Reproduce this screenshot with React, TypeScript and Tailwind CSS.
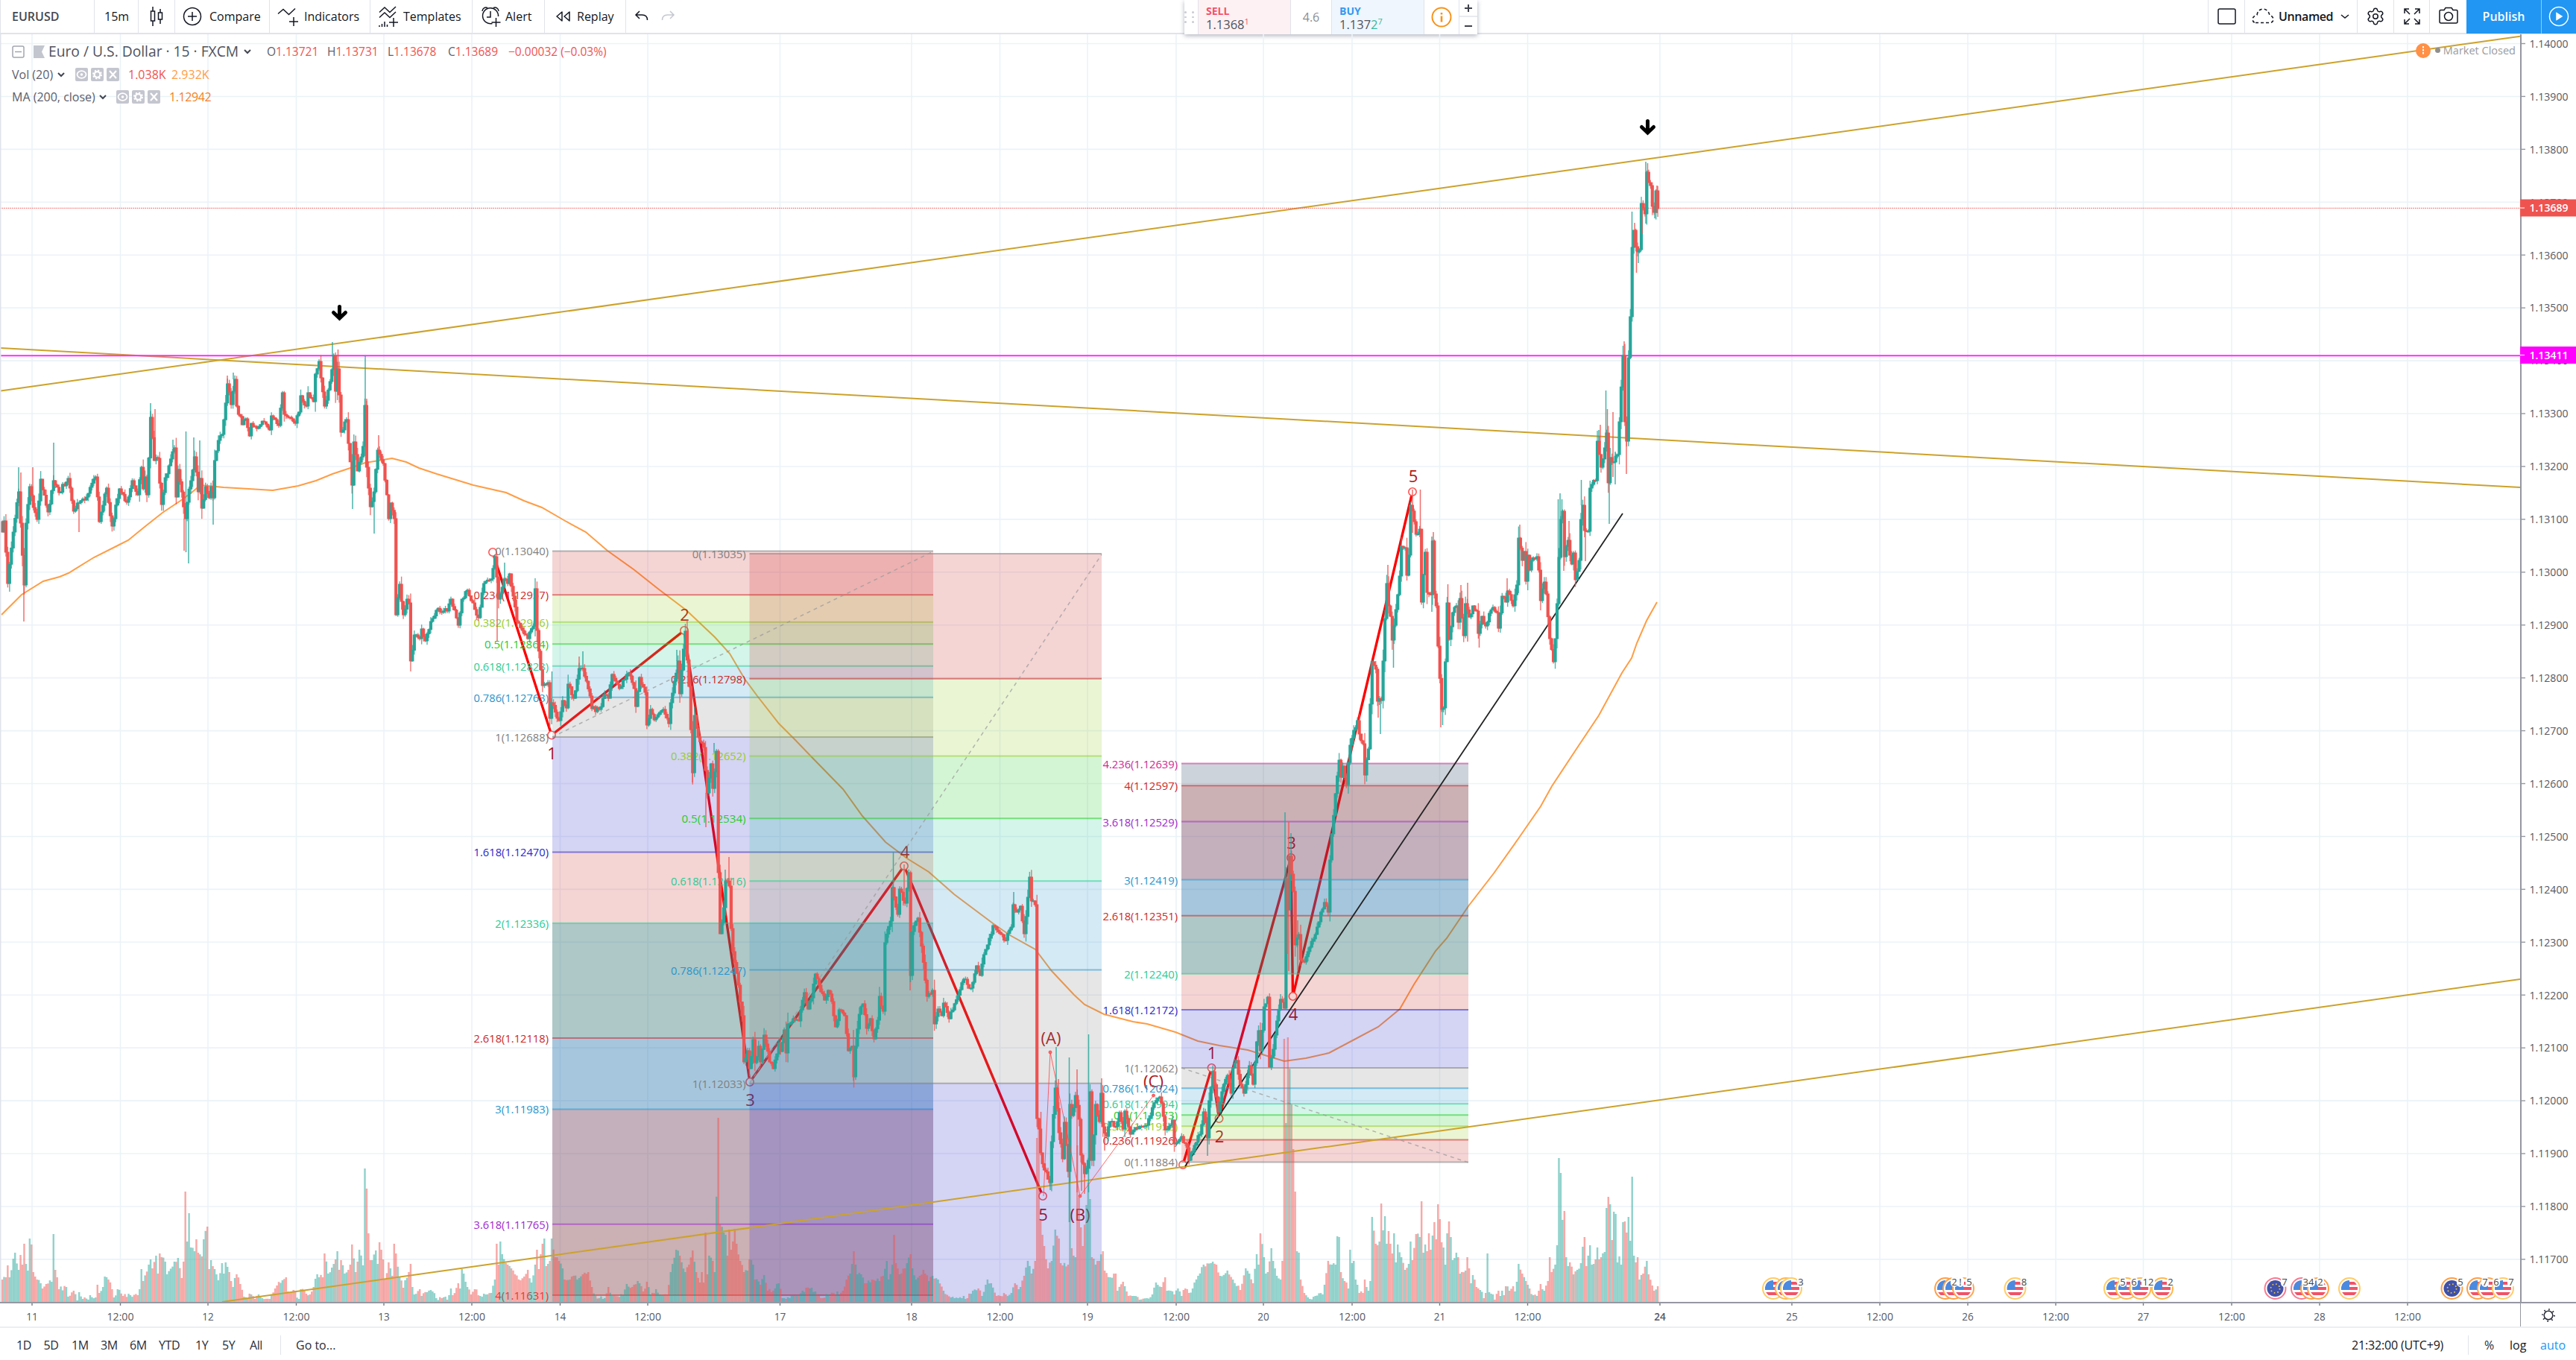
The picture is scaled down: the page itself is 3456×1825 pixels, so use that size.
import React from "react";
import { Settings } from "lucide-react";
import { clsx } from "clsx";

type Pt = [number, number];

const TOP = 46;
const BOTTOM = 1747;
const WIDTH = 3381;
const STEP = 2.457;
const FONT = "'Open Sans', 'Noto Sans', sans-serif";

const UP = "#26a69a";
const DOWN = "#ef5350";

const priceY = (price: number) => 58.5 + (1.14 - price) * 70930;

// Flat "x y x y ..." list to points
const parse = (s: string): Pt[] => {
  const n = s.trim().split(/\s+/).map(Number);
  const out: Pt[] = [];
  for (let i = 0; i < n.length; i += 2) out.push([n[i], n[i + 1]]);
  return out;
};

const CLOSES = parse(`
3 714 5 699 7 741 11 783 18 714 25 660 28 702 32 785 36 702 40 653 45 681 50 697 55 643 65 687 72 645 80 661 92 642
98 686 103 675 114 671 129 640 134 700 143 655 151 706 160 656 171 674 177 645 186 664 190 627 193 656 195 640 198 664
202 560 208 618 212 615 217 677 221 641 234 601 237.5 667 240 630 248 696 250 629 252 674 262 613 267 660 269 642
271 682 275 653 280 668 283 653 286 668 289 618 292 591 297 560 299 583 304 515 309 543 314 509 317 545 325 570
329 562 335 585 338 568 344 575 354 566 361 577 365 558 373 571 378 527 382 556 395 568 400 553 404 531 411 545
413 527 421 539 424 502 428 485 436 545 442 512 447 477 450 525 452 495 456 530 458 580 464 563 468 595 472 651
475 593 480 632 486 599 490 544 493 627 497 680 502 660 507 604 515 622 520 664 522 696 525 675 529 696 531 825
535 784 540 825 546 804 549 809 550 887 556 852 562 857 566 844 571 860 578 834 585 819 601 820 605 804 614 839
620 804 626 792 635 809 643 829 650 783 659 777 664 747 670 804 676 777 680 783 683 770 689 800 693 834 700 846
707 857 715 840 719 790 721 846 727 863 729 920 734 916 738 964 741 943 749 967 755 940 759 950 763 918 770 937
777 897 781 914 783 897 792 934 795 951 804 952 811 932 816 937 822 905 832 924 843 903 850 924 854 948 859 909
866 929 868 973 872 952 878 966 889 952 897 971 901 943 909 887 911 931 916 871 919 847 924 921 929 1037 932 960
937 989 943 1003 949 1064 953 1025 956 1058 961 1008 963 1171 966 1253 970 1218 973 1182 978 1189 981 1246 984 1277
990 1322 996 1363 999 1425 1002 1410 1006 1434 1010 1395 1012 1426 1017 1404 1020 1425 1026 1389 1032 1425 1038 1434
1045 1400 1047 1411 1052 1382 1054 1413 1057 1374 1065 1367 1072 1370 1078 1332 1085 1354 1089 1339 1093 1307
1105 1342 1111 1329 1116 1344 1120 1378 1127 1355 1134 1363 1138 1410 1142 1404 1145 1445 1149 1404 1154 1361
1158 1347 1162 1380 1168 1367 1172 1394 1177 1369 1181 1337 1185 1357 1188 1265 1194 1236 1198 1191 1204 1227
1208 1193 1215 1212 1219 1171 1221 1309 1224 1250 1231 1232 1235 1251 1243 1337 1250 1329 1253 1374 1258 1354
1263 1363 1267 1346 1274 1367 1287 1328 1294 1314 1303 1326 1311 1296 1316 1309 1321 1281 1327 1259 1333 1242
1341 1253 1350 1262 1356 1244 1360 1214 1364 1224 1369 1216 1374 1253 1378 1204 1382 1177 1385 1209 1388 1214
1390.5 1501 1394 1515 1396 1547 1400 1587 1402 1570 1408 1587 1412 1532 1415 1512 1417 1460 1421 1520 1426 1555
1428 1506 1432 1572 1435 1482 1438 1497 1444 1470 1447 1502 1449.5 1550 1455 1575 1459.5 1557 1461.5 1465 1464 1557
1469 1482 1474 1505 1477 1467 1480 1512 1484 1525 1489 1505 1496 1512 1502 1493 1506 1515 1509 1491 1517 1522
1524 1513 1538 1510 1544 1497 1548 1480 1555 1472 1559 1480 1563 1516 1572 1503 1576 1535 1585 1525 1592 1540
1595 1557 1602 1537 1609 1522 1615 1492 1619 1527 1623 1477 1627 1438 1632 1472 1635 1492 1639 1465 1646 1443
1651 1467 1655 1433 1660 1423 1665 1455 1669 1467 1675 1430 1682 1455 1685 1398 1688 1383 1691 1410 1695 1338
1697 1351 1701 1338 1704 1432 1709 1408 1713 1370 1718 1341 1722 1353 1724.5 1179 1728 1221 1731 1149 1736 1196
1738.5 1268 1743 1254 1746 1288 1751 1291 1758 1271 1765 1254 1771 1224 1776 1211 1781 1224 1784 1154 1788 1119
1792 1065 1796 1020 1799 1043 1801 1028 1807 1053 1811 1000 1817 980 1820 967 1823 985 1828 998 1830 1040 1835 1005
1840 1013 1842 888 1846 898 1848 941 1852 940 1855 887 1858 830 1861 783 1863 813 1866 827 1868.5 859 1872 818
1877 773 1879 733 1886 735 1888 772 1891 745 1893.5 678 1897 700 1901 717 1904 710 1907 808 1912 741 1914 795
1919 798 1921.5 726 1925 797 1928 813 1930 867 1933 952 1937 950 1940 888 1942 809 1945 858 1948 822 1954 813
1956 835 1959 803 1964 853 1967 810 1971 828 1976 813 1981 820 1984 850 1988 827 1993 840 1997 823 2003 815
2008 822 2011 843 2015 800 2020 808 2022 793 2031 813 2035 785 2037.5 722 2042 752 2044 740 2047 780 2050 745
2052 765 2055 752 2062 747 2064 765 2067 806 2071 781 2075 797 2078 857 2083 888 2087 857 2089 810 2091 748
2093 697 2096 686 2099 747 2104 725 2107 745 2109 757 2112 742 2114 778 2118 752 2120 697 2122.5 678 2126 712
2130 713 2132 690 2134 655 2136 650 2141 645 2144 592 2148 627 2152 601 2154.5 581 2157 648 2160 614 2164 620
2170 610 2172 566 2176.5 477 2179.5 566 2182 592 2184.5 480 2187 425 2189.5 332 2191.5 309 2194 331 2196 338
2199 335 2201 273 2204 279 2206 287 2208.5 231 2211 245 2214 249 2216 277 2219 285 2221 256 2223.5 280`);

// Standout wicks: x, from, to, direction
const WICKS: [number, number, number, boolean][] = [
  [25, 627, 660, true], [28, 634, 700, false], [32, 785, 834, false], [44, 627, 680, false], [72, 594, 645, true],
  [106, 675, 714, false], [202, 541, 560, true], [208, 549, 618, false], [232, 590, 601, true], [247, 696, 739, false],
  [249.5, 579, 741, true], [253, 674, 756, true], [260, 587, 613, true], [268, 591, 642, true], [286, 660, 704, true],
  [305, 504, 515, false], [313, 500, 509, true], [446, 459, 477, true], [453.5, 469, 530, false], [473, 640, 683, true],
  [490, 477, 544, true], [492, 535, 627, false], [502, 660, 716, true], [508, 584, 604, false], [667, 747, 860, false],
  [677, 755, 777, true], [740.5, 901, 943, true], [782, 874, 897, true], [777, 881, 897, false], [908, 872, 887, true],
  [929, 1037, 1050, false], [947, 1064, 1110, false], [958, 997, 1010, true], [978, 1150, 1189, false], [973, 1167, 1182, true],
  [1145, 1382, 1450, false], [1198.5, 1143, 1191, true], [1221, 1309, 1329, false], [1213, 1160, 1212, false],
  [1221.5, 1250, 1318, true], [1360, 1197, 1214, true], [1396.5, 1492, 1547, false], [1409, 1587, 1597, true],
  [1417, 1405, 1460, true], [1420, 1448, 1520, false], [1434.5, 1419, 1640, true], [1445, 1435, 1600, false],
  [1451, 1550, 1598, false], [1455, 1575, 1602, false], [1460.5, 1388, 1600, true], [1478, 1447, 1470, false],
  [1482, 1515, 1544, false], [1620, 1500, 1551, true], [1724, 1090, 1179, true], [1729, 1103, 1303, false],
  [1732, 1118, 1149, true], [1727, 1200, 1280, false], [1741, 1235, 1302, false], [1852, 940, 985, true],
  [1849, 941, 963, false], [1862, 758, 783, false], [1869.5, 859, 896, true], [1895, 657, 715, false],
  [1905.5, 657, 710, false], [1921, 720, 821, true], [1923, 714, 760, false], [1933, 952, 976, false],
  [1935.5, 950, 973, true], [1942.5, 784, 809, false], [1960, 785, 803, false], [1969, 782, 861, false],
  [1984.5, 850, 869, false], [2022, 776, 793, false], [2039, 704, 722, false], [2090.5, 670, 748, true],
  [2093, 662, 697, true], [2095.5, 670, 686, true], [2098, 747, 766, false], [2105, 699, 725, false],
  [2121.5, 644, 678, true], [2127, 712, 753, false], [2145, 577, 592, true], [2147, 570, 627, false],
  [2154.5, 524, 581, true], [2156.5, 549, 648, false], [2159, 648, 703, true], [2164, 553, 640, false],
  [2167, 606, 650, true], [2179, 458, 477, false], [2182, 592, 636, false], [2189.5, 284, 332, true],
  [2193, 299, 331, false], [2195.5, 338, 366, false], [2198, 335, 353, true], [2203, 279, 313, false],
  [2208, 217, 300, true], [2210.5, 219, 245, false], [2220, 285, 293, true], [2223, 249, 286, false],
];

const VOLUMES = parse(`
3 30 8 33 10 49 14 33 19 41 21 66 25 43 27 63 30 50 32 78 35 51 38 42 40 85 42 77 44 40 50 30 55 25 58 18 62 24 70 27
72 91 74 43 77 33 80 17 88 20 92 7 100 15 103 2 107 13 112 4 118 3 122 9 128 6 131 23 134 12 138 20 141 34 146 30
150 17 154 6 159 17 165 8 175 9 186 9 188 17 190 44 192 28 200 50 202 57 204 45 210 62 212 38 215 65 222 54 225 37
233 40 235 54 240 59 243 32 247 54 249.5 148 251 81 253.5 119 256 73 260 68 264 84 266 66 271 61 274 84 277 104
279 101 281 44 284 56 288 44 294 29 299 52 301 38 303 53 308 40 312 20 315 32 318 37 322 24 327 7 333 4 335 11 342 4
348 10 353 5 362 4 368 18 372 22 378 29 383 33 387 14 393 16 400 4 403 17 410 11 416 10 420 20 425 37 433 33 436 65
440 38 446 46 449 64 451 57 453 68 456 43 458 56 462 38 468 43 471 50 473 77 477 40 480 54 482 70 487 49 489.5 179
492 152 494 92 497 56 500 56 503 69 507 51 510 80 512 70 515 57 517 30 522 53 527 35 530 78 532 65 537 34 540 19
544 29 548 40 550.5 51 553 20 555 10 562 17 566 8 574 13 580 14 586 5 592 5 597 7 601 3 604 18 608 9 614 25 617 18
619 44 623 38 627 20 633 10 638 17 645 8 650 11 658 12 663 30 667 78 669 50 672 81 674 64 680 50 690 37 698 29
703 34 708 43 712 26 718 50 721 70 723 44 728 78 731 85 733 48 737 55 740 85 745 60 750 55 754 45 758 30 765 30
770 35 775 30 778 32 781 69 783 37 790 40 795 20 800 8 805 5 812 5 817 20 822 8 835 9 840 24 848 20 855 28 862 14
868 27 872 10 880 17 885 10 895 10 900 40 908 70 913 62 920 40 925 50 929 69 934 40 938 26 942 40 945 26 947.5 93
950 37 952 62 957 55 960 40 962.5 247 965 158 967 104 970 93 973 90 976 62 978 97 982 70 985 98 988 78 992 55
998 40 1004 42 1006 57 1010 50 1013 30 1020 23 1026 36 1030 15 1038 15 1044 25 1050 5 1060 5 1068 8 1076 15 1086 18
1095 14 1102 5 1110 10 1120 10 1130 15 1136 30 1141 38 1145 68 1147 50 1150 37 1155 37 1160 25 1170 30 1180 28
1185 35 1189 55 1191 30 1196 50 1198.5 90 1202 52 1208 37 1215 45 1222 64 1225 45 1230 30 1235 35 1240 43 1246 28
1252 35 1258 30 1265 15 1275 6 1285 5 1292 8 1298 5 1305 15 1312 18 1318 8 1325 30 1330 25 1338 8 1350 10 1358 12
1362 25 1367 17 1370 20 1375 35 1380 55 1385 38 1388 55 1390.5 220 1393 240 1396 110 1398 90 1400.5 180 1402 75
1407 45 1412 55 1417 97 1420 85 1423 52 1432 50 1434.5 240 1437 72 1440 62 1442 60 1445 210 1447 140 1450 100
1453 75 1457 130 1459 150 1461 160 1463.5 138 1466 60 1470 50 1475 55 1479 68 1483 42 1490 33 1496 38 1500 15
1507 27 1513 8 1522 8 1530 3 1538 5 1545 10 1550 26 1558 20 1563 33 1566 15 1575 10 1580 18 1585 8 1590 18 1595 12
1600 18 1608 35 1614 50 1624 52 1632 50 1638 35 1646 42 1655 30 1665 16 1671 45 1675 38 1681 25 1685 64 1688 50
1692 92 1695 60 1698 38 1702 40 1705 72 1708 55 1712 35 1718 30 1721 55 1724 353 1726.5 240 1729 355 1731.5 265
1734 205 1736.5 148 1739 68 1742 66 1745 30 1750 12 1757 4 1765 8 1775 10 1781 12 1783 55 1787 50 1791 50 1794 88
1796 87 1799 40 1803 28 1807 26 1809 18 1811 70 1813 52 1816 55 1819 30 1824 12 1828 12 1831 30 1835 15 1839 28
1842 114 1845 78 1848 76 1850 81 1852 132 1855 96 1857 115 1860 78 1862 95 1865 78 1867 65 1870 92 1872 53 1876 77
1880 60 1885 43 1890 51 1892 81 1896 56 1901 91 1904 87 1906 135 1909 66 1911 77 1914 68 1916 92 1919 70 1921 89
1924 107 1926 84 1928.5 131 1931 111 1933 80 1936 73 1939 50 1941 92 1943.5 108 1946 87 1949 56 1953 66 1956 60
1958 38 1966 42 1968 60 1970 45 1973 25 1977 36 1980 20 1986 16 1990 5 1993 12 1995 65 1998 13 2003 10 2006 3
2010 15 2013 8 2015 15 2018 9 2020 21 2026 15 2030 21 2033 14 2036 27 2038 51 2042 38 2046 28 2052 18 2058 9
2063 8 2067 24 2070 17 2073 15 2076 28 2079 60 2081 40 2086 50 2089 76 2091 193 2093.5 173 2096 110 2098.5 122
2101 60 2104 48 2107 53 2110 37 2115 43 2120 52 2123 74 2127 87 2129 48 2132 76 2135 50 2140 57 2143 73 2146 57
2149 60 2152 67 2155 126 2157.5 141 2160 131 2162 83 2165 121 2167 118 2170 53 2173 61 2175 50 2177.5 107 2180 108
2182 93 2185 114 2187 82 2189.5 168 2192 62 2195 53 2197 60 2200 30 2204 38 2209 55 2212 37 2216 22 2219 15 2223.5 21`);

const MA = parse(`
2 825 29 798 58 780 80 774 92 769 126 748 160 731 172 725 194 707 218 688 242 672 257 661 269 651 300 654 334 656
366 658 400 652 424 645 446 636 470 628 490 621 514 617 526 615 545 620 562 628 586 636 635 651 679 661 703 672
727 681 760 700 786 714 815 739 850 764 884 791 921 819 959 855 979 877 999 911 1016 934 1045 971 1065 991 1091 1018
1131 1059 1157 1095 1188 1130 1217 1152 1246 1170 1280 1200 1332 1239 1355 1255 1389 1274 1411 1303 1441 1335
1455 1348 1481 1361 1520 1371 1539 1374 1577 1385 1607 1397 1636 1403 1674 1409 1723 1424 1752 1420 1783 1413
1815 1396 1849 1378 1878 1354 1897 1321 1926 1276 1941 1259 1970 1216 2004 1172 2038 1124 2067 1082 2082 1055
2113 1008 2145 960 2176 903 2189 883 2196 863 2209 833 2223 808`);

const noise = (i: number, salt: number) => {
  const v = Math.sin(i * 12.9898 + salt * 78.233) * 43758.5453;
  return v - Math.floor(v);
};

// Snap the known points to bar slots and fill the gaps linearly
const resample = (pts: Pt[], jitter: number) => {
  const last = Math.round((pts[pts.length - 1][0] - 3) / STEP);
  const fixed: (number | undefined)[] = new Array(last + 1).fill(undefined);
  pts.forEach(([x, v]) => {
    fixed[Math.round((x - 3) / STEP)] = v;
  });
  const out: number[] = [];
  let prev = 0;
  for (let i = 0; i <= last; i++) {
    if (fixed[i] !== undefined) {
      out.push(fixed[i] as number);
      prev = i;
      continue;
    }
    let next = i;
    while (fixed[next] === undefined) next++;
    const a = fixed[prev] as number;
    const b = fixed[next] as number;
    const t = (i - prev) / (next - prev);
    out.push(a + (b - a) * t + (noise(i, 4) - 0.5) * jitter);
  }
  return out;
};

const closes = resample(CLOSES, 7);
const volumes = resample(VOLUMES, 6);

const bars = closes.map((c, i) => {
  const o = i === 0 ? 700 : closes[i - 1];
  const x = 3 + i * STEP;
  const range = Math.min(Math.abs(c - o), 40);
  return {
    x,
    up: c < o,
    top: Math.min(o, c),
    bottom: Math.max(o, c),
    high: Math.min(o, c) - noise(i, 1) * (4 + range * 0.3),
    low: Math.max(o, c) + noise(i, 2) * (4 + range * 0.3),
    volume: Math.max(2, volumes[i] ?? 10),
  };
});

const LEVELS: { k: number; line: string; fill: string; alpha: number }[] = [
  { k: 0, line: "#808080", fill: "#cc2828", alpha: 0.2 },
  { k: 0.236, line: "#cc2828", fill: "#95cc28", alpha: 0.2 },
  { k: 0.382, line: "#95cc28", fill: "#28cc28", alpha: 0.2 },
  { k: 0.5, line: "#28cc28", fill: "#28cc95", alpha: 0.2 },
  { k: 0.618, line: "#28cc95", fill: "#2895cc", alpha: 0.2 },
  { k: 0.786, line: "#2895cc", fill: "#808080", alpha: 0.2 },
  { k: 1, line: "#808080", fill: "#2828cc", alpha: 0.2 },
  { k: 1.618, line: "#2828cc", fill: "#cc2828", alpha: 0.2 },
  { k: 2, line: "#28cc95", fill: "#347373", alpha: 0.4 },
  { k: 2.618, line: "#cc2828", fill: "#2070aa", alpha: 0.4 },
  { k: 3, line: "#2895cc", fill: "#6b3957", alpha: 0.4 },
  { k: 3.618, line: "#a028cc", fill: "#7d3943", alpha: 0.4 },
  { k: 4, line: "#cc2828", fill: "#052346", alpha: 0.2 },
  { k: 4.236, line: "#cc2895", fill: "none", alpha: 0 },
];

interface FibProps {
  x1: number;
  x2: number;
  labels: string[];
  zero: number;
  one: number;
}

const Fib: React.FC<FibProps> = ({ x1, x2, labels, zero, one }) => {
  const yAt = (k: number) => priceY(zero + (one - zero) * k);
  return (
    <g>
      {labels.map((_, i) => {
        const next = LEVELS[i + 1];
        if (!next) return null;
        const a = yAt(LEVELS[i].k);
        const b = Math.min(yAt(next.k), BOTTOM);
        return (
          <rect
            key={i}
            x={x1}
            y={Math.min(a, b)}
            width={x2 - x1}
            height={Math.abs(b - a)}
            fill={LEVELS[i].fill}
            fillOpacity={LEVELS[i].alpha}
          />
        );
      })}
      {labels.map((label, i) => {
        const { k, line } = LEVELS[i];
        const y = yAt(k);
        return (
          <g key={label}>
            <line x1={x1} x2={x2} y1={y} y2={y} stroke={line} strokeOpacity={0.55} strokeWidth={2} />
            <text
              x={x1 - 5}
              y={y + 6}
              textAnchor="end"
              fontSize={14.5}
              fontWeight={500}
              fill={line}
              textLength={label.length * 7.17}
              lengthAdjust="spacingAndGlyphs"
            >
              {label}
            </text>
          </g>
        );
      })}
    </g>
  );
};

const FIB_A = [
  "0(1.13040)", "0.236(1.12957)", "0.382(1.12906)", "0.5(1.12864)", "0.618(1.12823)", "0.786(1.12763)",
  "1(1.12688)", "1.618(1.12470)", "2(1.12336)", "2.618(1.12118)", "3(1.11983)", "3.618(1.11765)", "4(1.11631)",
];
const FIB_B = [
  "0(1.13035)", "0.236(1.12798)", "0.382(1.12652)", "0.5(1.12534)", "0.618(1.12416)", "0.786(1.12247)", "1(1.12033)",
];
const FIB_C = [
  "0(1.11884)", "0.236(1.11926)", "0.382(1.11952)", "0.5(1.11973)", "0.618(1.11994)", "0.786(1.12024)",
  "1(1.12062)", "1.618(1.12172)", "2(1.12240)", "2.618(1.12351)", "3(1.12419)", "3.618(1.12529)", "4(1.12597)",
  "4.236(1.12639)",
];

const WAVES: Pt[][] = [
  parse("661 741 740 986.5 918 846 1006 1452 1213 1162 1399 1605"),
  parse("1587 1563 1625.5 1433 1635.5 1501 1732 1151 1734.5 1337 1895 660"),
];
const CORRECTION = parse("1400 1605 1409 1412 1449 1605 1547.5 1470");

const WAVE_LABELS: [string, number, number][] = [
  ["1", 740.5, 1011], ["2", 918.5, 825], ["3", 1006.5, 1476], ["4", 1214, 1143], ["5", 1399.5, 1630],
  ["(A)", 1410, 1393], ["(B)", 1449, 1630], ["(C)", 1547.5, 1451],
  ["1", 1626, 1413], ["2", 1636, 1525], ["3", 1732.5, 1131], ["4", 1735, 1361], ["5", 1896, 639],
];

const TIMES: [string, number][] = [
  ["11", 43], ["12:00", 161.5], ["12", 279], ["12:00", 397.5], ["13", 515], ["12:00", 633], ["14", 751.5],
  ["12:00", 869], ["17", 1046.5], ["18", 1223], ["12:00", 1341.5], ["19", 1459], ["12:00", 1578], ["20", 1695],
  ["12:00", 1814], ["21", 1931.5], ["12:00", 2049.5], ["24", 2227], ["25", 2404], ["12:00", 2522], ["26", 2640],
  ["12:00", 2758], ["27", 2875.5], ["12:00", 2994], ["28", 3112], ["12:00", 3230],
];

const PRICES = Array.from({ length: 24 }, (_, i) => 1.14 - i * 0.001);

const EVENTS: { x: number; flag: "us" | "eu"; ring: string }[] = [
  { x: 2379, flag: "us", ring: "#ffcc66" }, { x: 2396, flag: "us", ring: "#ffb74d" }, { x: 2403, flag: "us", ring: "#ffcc66" },
  { x: 2610, flag: "us", ring: "#ff9f45" }, { x: 2621, flag: "us", ring: "#ff9f45" }, { x: 2634, flag: "us", ring: "#ffa64d" },
  { x: 2703.5, flag: "us", ring: "#ffcc66" }, { x: 2837, flag: "us", ring: "#ffcc66" }, { x: 2853, flag: "us", ring: "#ffb74d" },
  { x: 2871.5, flag: "us", ring: "#ffb74d" }, { x: 2901, flag: "us", ring: "#ffb74d" }, { x: 3052.5, flag: "eu", ring: "#f77a90" },
  { x: 3088, flag: "us", ring: "#f77a90" }, { x: 3101, flag: "us", ring: "#ff9f45" }, { x: 3110, flag: "us", ring: "#ff9f45" },
  { x: 3152, flag: "us", ring: "#ffcc66" }, { x: 3289.5, flag: "eu", ring: "#ff9f45" }, { x: 3324, flag: "us", ring: "#ff9f45" },
  { x: 3338, flag: "us", ring: "#ffa64d" }, { x: 3358, flag: "us", ring: "#ffcc66" },
];

const EVENT_COUNTS: [string, number][] = [
  ["3", 2416], ["2", 2622], ["!", 2630], ["5", 2642], ["8", 2715.5], ["5", 2848], ["6", 2863], ["12", 2882],
  ["2", 2912], ["7", 3065], ["34", 3097], ["2", 3113], ["5", 3301], ["7", 3334], ["6", 3349], ["7", 3369],
];

const toPoints = (pts: Pt[]) => pts.map((p) => p.join(",")).join(" ");

const EventFlag = ({ x, flag, ring }: { x: number; flag: string; ring: string }) => (
  <g transform={`translate(${x} 1729)`}>
    <circle r={14} fill="#fff" stroke={ring} strokeWidth={2} />
    {flag === "us" ? (
      <g clipPath="url(#flagClip)">
        <rect x={-11} y={-11} width={22} height={22} fill="#fff" />
        {[-7, 0, 7].map((y) => (
          <rect key={y} x={-11} y={y - 2} width={22} height={4} fill="#ef5369" />
        ))}
        <rect x={-11} y={-11} width={11} height={13} fill="#4a8ae0" />
      </g>
    ) : (
      <g>
        <circle r={11} fill="#3f51a8" />
        <circle r={6} fill="none" stroke="#f0c94c" strokeWidth={1.8} strokeDasharray="1.6 3.1" />
      </g>
    )}
  </g>
);

const DownArrow = ({ x, y }: { x: number; y: number }) => (
  <path
    d={`M${x} ${y - 8}V${y + 7}M${x - 8} ${y}L${x} ${y + 7.5}L${x + 8} ${y}`}
    fill="none"
    stroke="#000"
    strokeWidth={5}
    strokeLinecap="round"
    strokeLinejoin="miter"
  />
);

const ChartPane = () => (
  <svg width={WIDTH} height={BOTTOM - TOP} viewBox={`0 ${TOP} ${WIDTH} ${BOTTOM - TOP}`} fontFamily={FONT}>
    <defs>
      <clipPath id="flagClip">
        <circle r={11} />
      </clipPath>
    </defs>
    {PRICES.map((p) => (
      <line key={p} x1={0} x2={WIDTH} y1={priceY(p)} y2={priceY(p)} stroke="#ebf3f8" strokeWidth={1.6} />
    ))}
    {TIMES.map(([, x]) => (
      <line key={x} x1={x} x2={x} y1={TOP} y2={BOTTOM} stroke="#ebf3f8" strokeWidth={1.6} />
    ))}

    <polyline points={toPoints(MA)} fill="none" stroke="#ff9d45" strokeWidth={2} />

    {WAVES.map((w, i) => (
      <g key={i}>
        <polyline points={toPoints(w)} fill="none" stroke="#ff0000" strokeWidth={3.4} />
        {w.map(([x, y]) => (
          <circle key={x} cx={x} cy={y} r={5.2} fill="#fff" stroke="#f55" strokeWidth={1.6} />
        ))}
      </g>
    ))}
    {WAVE_LABELS.map(([t, x, y]) => (
      <text key={`${t}${x}`} x={x} y={y + 8} textAnchor="middle" fontSize={22} fontWeight={500} fill="#b01414">
        {t}
      </text>
    ))}

    <Fib x1={741} x2={1252} zero={1.1304} one={1.12688} labels={FIB_A} />
    <Fib x1={1005.5} x2={1478} zero={1.13035} one={1.12033} labels={FIB_B} />
    <Fib x1={1585} x2={1970} zero={1.11884} one={1.12062} labels={FIB_C} />
    <g stroke="#999" strokeOpacity={0.7} strokeWidth={1.5} strokeDasharray="5 5">
      <line x1={741} y1={989} x2={1252} y2={740} />
      <line x1={1006} y1={1453} x2={1478} y2={744} />
      <line x1={1585} y1={1433} x2={1970} y2={1560} />
    </g>

    {bars.map((b) => (
      <rect
        key={b.x}
        x={b.x - STEP / 2}
        y={BOTTOM - b.volume}
        width={STEP}
        height={b.volume}
        fill={b.up ? UP : DOWN}
        fillOpacity={0.5}
      />
    ))}

    <g stroke="#cca22c" strokeWidth={2}>
      <line x1={1} y1={524.5} x2={WIDTH} y2={48.7} />
      <line x1={1} y1={467} x2={WIDTH} y2={654} />
      <line x1={298} y1={1747} x2={WIDTH} y2={1314} />
    </g>
    <line x1={0} x2={WIDTH} y1={477.3} y2={477.3} stroke="#ff2bff" strokeWidth={2} />
    <line
      x1={0}
      x2={WIDTH}
      y1={279.3}
      y2={279.3}
      stroke={DOWN}
      strokeOpacity={0.8}
      strokeWidth={1.2}
      strokeDasharray="1.5 1.2"
    />
    <line x1={1590} y1={1565} x2={2177} y2={689} stroke="#222" strokeWidth={1.8} />

    {bars.map((b) => (
      <g key={b.x} fill={b.up ? UP : DOWN}>
        <rect x={b.x - 0.7} y={b.high} width={1.4} height={b.low - b.high} fillOpacity={0.8} />
        <rect x={b.x - 2.1} y={b.top - 0.5} width={4.2} height={Math.max(2, b.bottom - b.top + 1)} />
      </g>
    ))}
    {WICKS.map(([x, y1, y2, up]) => (
      <line key={`${x}-${y1}`} x1={x} x2={x} y1={y1} y2={y2} stroke={up ? UP : DOWN} strokeOpacity={0.85} strokeWidth={1.5} />
    ))}

    <g fill="none" stroke="#f44" strokeOpacity={0.8}>
      <polyline points={toPoints(CORRECTION)} strokeWidth={1} />
      {CORRECTION.slice(1).map(([x, y]) => (
        <circle key={x} cx={x} cy={y} r={2} fill="#f66" />
      ))}
    </g>

    <DownArrow x={455.5} y={419.5} />
    <DownArrow x={2210.5} y={170.5} />

    {EVENTS.map((e) => (
      <EventFlag key={e.x} {...e} />
    ))}
    {EVENT_COUNTS.map(([t, x]) => (
      <g key={x}>
        <rect x={x - t.length * 4 - 1} y={1713} width={t.length * 8 + 2} height={14} rx={5} fill="#fff" />
        <text x={x} y={1725} textAnchor="middle" fontSize={13} fill="#444">
          {t}
        </text>
      </g>
    ))}
    <rect x={0} y={TOP} width={1.5} height={BOTTOM - TOP} fill="#e0e3eb" />
  </svg>
);

const PriceTag = ({ y, color, children }: { y: number; color: string; children: string }) => (
  <g>
    <rect x={0} y={y - 11.5} width={75} height={23} fill={color} />
    <line x1={0} x2={6} y1={y} y2={y} stroke="#fff" strokeOpacity={0.7} strokeWidth={1.5} />
    <text
      x={12.5}
      y={y + 5.3}
      textLength={52}
      lengthAdjust="spacingAndGlyphs"
      fontSize={14.5}
      fontWeight={600}
      fill="#fff"
    >
      {children}
    </text>
  </g>
);

const PriceAxis = () => (
  <svg width={75} height={BOTTOM - TOP} viewBox={`0 ${TOP} 75 ${BOTTOM - TOP}`} fontFamily={FONT}>
    <rect x={0} y={TOP} width={2} height={BOTTOM - TOP} fill="#9598a1" />
    {PRICES.map((p) => (
      <g key={p}>
        <rect x={1} y={priceY(p) - 0.7} width={6} height={1.4} fill="#9598a1" />
        <text
          x={12.5}
          y={priceY(p) + 5.3}
          textLength={52}
          lengthAdjust="spacingAndGlyphs"
          fontSize={14.5}
          fontWeight={500}
          fill="#555963"
        >
          {p.toFixed(5)}
        </text>
      </g>
    ))}
    <PriceTag y={279} color="#ef5350">
      1.13689
    </PriceTag>
    <PriceTag y={476.5} color="#ff00ff">
      1.13411
    </PriceTag>
  </svg>
);

const TimeAxis = () => (
  <svg width={WIDTH} height={31} viewBox={`0 1749 ${WIDTH} 31`} fontFamily={FONT}>
    {TIMES.map(([t, x]) => (
      <g key={x}>
        <rect x={x - 0.7} y={1749} width={1.4} height={3} fill="#777b85" />
        <text
          x={x}
          y={1772}
          textAnchor="middle"
          textLength={t.length > 2 ? 36 : 15.5}
          lengthAdjust="spacingAndGlyphs"
          fontSize={14.5}
          fontWeight={t === "24" ? 600 : 500}
          fill="#555963"
        >
          {t}
        </text>
      </g>
    ))}
  </svg>
);

const Icon = ({ w = 28, children, className }: { w?: number; children: React.ReactNode; className?: string }) => (
  <svg
    width={w}
    height={28}
    viewBox={`0 0 ${w} 28`}
    fill="none"
    stroke="currentColor"
    strokeWidth={1.5}
    className={clsx("shrink-0", className)}
  >
    {children}
  </svg>
);

const Cell = ({ className, children }: { className: string; children: React.ReactNode }) => (
  <div className={clsx("flex h-full shrink-0 items-center border-r-[1.5px] border-[#e0e3eb]", className)}>{children}</div>
);

const Toolbar = () => (
  <header className="relative flex h-[46px] items-center border-b-2 border-l border-[#e0e3eb] bg-white text-[16px] text-[#131722]">
    <Cell className="w-[126px] pl-[15px]">
      <span className="text-[16px] font-semibold text-[#434651]">EURUSD</span>
    </Cell>
    <Cell className="w-[59px] pl-[13px] font-medium">15m</Cell>
    <Cell className="w-[49px] pl-3">
      <Icon w={24}>
        <path d="M7 1v6M7 20v7M4.500 7h5v13h-5zM17 4v5M17 18v6M14.500 9h5v9h-5z" />
      </Icon>
    </Cell>
    <Cell className="w-[127px] gap-2 pl-[10px] font-medium">
      <Icon>
        <circle cx="13" cy="14" r="11.500" />
        <path d="M13 8v12M7 14h12" />
      </Icon>
      Compare
    </Cell>
    <Cell className="w-[135px] gap-2 pl-[10px] font-medium">
      <Icon>
        <path d="M1 10.500L8 4.500L15.500 11.500L24 3.500M22 15v12M16 21h12" />
      </Icon>
      Indicators
    </Cell>
    <Cell className="w-[137px] gap-[6px] pl-[10px] font-medium">
      <Icon>
        <path d="M2 8.500L9 2L16 8.500L24 1M2 15.500L9 9L16 15.500L24 8M21 16v12M15 22h12M2 26v2M5.500 24v4M9 21v7M12.500 25v3" />
      </Icon>
      Templates
    </Cell>
    <Cell className="w-[97px] gap-[5px] pl-[11px] font-medium">
      <Icon>
        <path d="M15.500 23.500A10.500 10.500 0 1 1 23.500 14M13 7v8H8M2 7A5 5 0 0 1 9 2.500M17 2.500A5 5 0 0 1 24 7M20.500 16v12M14.500 22h12" />
      </Icon>
      Alert
    </Cell>
    <Cell className="w-[109px] gap-1 pl-[13px] font-medium">
      <Icon w={26}>
        <path d="M10 8v12L3 14zM20 8v12L13 14z" strokeLinejoin="round" />
      </Icon>
      Replay
    </Cell>
    <div className="flex grow items-center gap-[6px] pl-[10px]">
      <Icon>
        <path d="M8 7L3 12l5 5M3.500 12h8q7 0 7 7" />
      </Icon>
      <Icon className="text-[#c5c8d0]">
        <path d="M15 7l5 5l-5 5M19.500 12h-8q-7 0-7 7" />
      </Icon>
    </div>
    <div className="flex h-full items-center border-l-[1.5px] border-[#e0e3eb]">
      <Cell className="w-[49px] justify-center">
        <Icon>
          <rect x="3" y="4" width="23" height="20" rx="2" />
        </Icon>
      </Cell>
      <Cell className="w-[151px] pl-2">
        <Icon w={32}>
          <path
            d="M6 22.500h20q4-1 4-5q-1-4-5-5q-2-8.500-9.500-8.500q-6.500 1-7.500 8q-6 2-6 6.500q1 4 4 4z"
            strokeDasharray="4 3"
            strokeWidth={1.6}
          />
        </Icon>
        <span className="ml-[5px] w-[80px] font-semibold tracking-tight">Unnamed</span>
        <Icon w={16}>
          <path d="M4 12l5 4l5-4" />
        </Icon>
      </Cell>
      <Cell className="w-[49px] justify-center">
        <Settings size={26} strokeWidth={1.4} />
      </Cell>
      <Cell className="w-[48px] justify-center">
        <Icon>
          <path d="M4 10V4h6M4 4l7 7M24 10V4h-6M24 4l-7 7M4 18v6h6M4 24l7-7M24 18v6h-6M24 24l-7-7" />
        </Icon>
      </Cell>
      <div className="flex h-full w-[49px] items-center justify-center">
        <Icon>
          <path d="M2 7q0-1.500 1.500-1.500H8L10 2.500h8l2 3h4.500Q26 5.500 26 7v14q0 2-2 2H4q-2 0-2-2z" />
          <circle cx="14" cy="14" r="5.500" />
        </Icon>
      </div>
      <div className="flex h-[45px] w-[101px] items-center justify-center border-r border-[#8ecaf9] bg-[#2196f3] font-semibold text-white">
        Publish
      </div>
      <div className="flex h-[45px] w-[46px] items-center justify-center bg-[#2196f3] text-white">
        <Icon>
          <circle cx="14" cy="14" r="12.500" />
          <path d="M11 9.500v9l7-4.500z" fill="currentColor" />
        </Icon>
      </div>
    </div>
    <OrderPanel />
  </header>
);

const OrderPanel = () => (
  <div className="absolute left-[1588px] top-0 flex h-[46px] w-[393px] bg-white shadow-[0_2px_6px_rgba(60,70,100,0.4)]">
    <div className="grid w-[18px] grid-cols-2 content-center justify-center gap-x-[2px] gap-y-1">
      {[0, 1, 2, 3, 4, 5].map((i) => (
        <span key={i} className="size-[2.5px] rounded-full bg-[#c9cbd1]" />
      ))}
    </div>
    <div className="flex w-[125px] flex-col justify-center gap-[1px] border-x border-[#e0e3eb] bg-[#fdf1f3] pl-[10px] leading-[17px]">
      <span className="text-[14px] font-bold text-[#f7506b]">SELL</span>
      <span className="text-[16.5px] text-[#50535e]">
        1.1368<sup className="text-[11px] text-[#f7506b]">1</sup>
      </span>
    </div>
    <div className="flex w-[54px] items-center justify-center text-[16px] text-[#8a8d95]">4.6</div>
    <div className="flex w-[125px] flex-col justify-center gap-[1px] border-x border-[#e0e3eb] bg-[#eff6fe] pl-[10px] leading-[17px]">
      <span className="text-[14px] font-bold text-[#3399f0]">BUY</span>
      <span className="text-[16.5px] text-[#50535e]">
        1.137<span className="text-[#3cb79b]">2</span>
        <sup className="text-[11px] text-[#3cb79b]">7</sup>
      </span>
    </div>
    <div className="flex w-[46px] items-center justify-center text-[#f7931a]">
      <Icon>
        <circle cx="14" cy="14" r="12.500" strokeWidth={2} />
        <path d="M14 12.500v8M14 8v2.500" strokeWidth={2.6} />
      </Icon>
    </div>
    <div className="grow border-l border-[#e0e3eb] text-[#40434c]">
      <div className="flex h-[23px] items-center justify-center border-b-2 border-[#e8eaf0]">
        <svg width="12" height="12" stroke="currentColor" strokeWidth={2}>
          <path d="M6 1v10M1 6h10" />
        </svg>
      </div>
      <div className="flex h-[23px] items-center justify-center">
        <svg width="12" height="12" stroke="currentColor" strokeWidth={2}>
          <path d="M1 6h10" />
        </svg>
      </div>
    </div>
  </div>
);

const Chevron = () => (
  <svg width="10" height="8" viewBox="0 0 10 8" fill="none" stroke="#434651" strokeWidth={2} className="shrink-0">
    <path d="M1 2l4 4l4-4" />
  </svg>
);

const StudyButtons = () => (
  <div className="flex gap-[4px]">
    <svg width="17" height="18" viewBox="0 0 17 18">
      <rect width="17" height="18" rx="2" fill="#c4c6cf" />
      <ellipse cx="8.500" cy="9" rx="6" ry="4.800" fill="none" stroke="#fff" strokeWidth="1.800" />
      <circle cx="8.500" cy="9" r="1.800" fill="#fff" />
    </svg>
    <svg width="17" height="18" viewBox="0 0 17 18">
      <rect width="17" height="18" rx="2" fill="#c4c6cf" />
      <circle cx="8.500" cy="9" r="5.500" fill="none" stroke="#fff" strokeWidth="2" strokeDasharray="2.300 2" />
      <circle cx="8.500" cy="9" r="3.800" fill="none" stroke="#fff" strokeWidth="2.200" />
    </svg>
    <svg width="17" height="18" viewBox="0 0 17 18">
      <rect width="17" height="18" rx="2" fill="#c4c6cf" />
      <path d="M4 4l9 10M13 4l-9 10" stroke="#fff" strokeWidth="2.200" />
    </svg>
  </div>
);

const Quote = ({ name, value }: { name: string; value: string }) => (
  <span className="w-[81px] whitespace-nowrap">
    {name}
    <span className="text-[#ef5350]">{value}</span>
  </span>
);

const Legend = () => (
  <div className="absolute left-4 top-[10px] leading-[26px] text-[#5d606b]">
    <div className="flex h-[26px] items-center">
      <svg width="17" height="17" viewBox="0 0 17 17" fill="none" stroke="#a3a6af" strokeWidth={1.5}>
        <rect x="1" y="1" width="15" height="15" rx="2" />
        <path d="M4 8.500h9" />
      </svg>
      <svg width="15" height="17" viewBox="0 0 15 17" className="ml-[12px] mr-[5px]">
        <path d="M0 0h15l-4 8.500l4 8.500H0z" fill="#c4c6cf" />
      </svg>
      <span className="w-[262px] whitespace-pre text-[19.25px] text-[#50535e]">Euro / U.S. Dollar · 15 · FXCM</span>
      <Chevron />
      <div className="ml-[21px] flex text-[15.5px]">
        <Quote name="O" value="1.13721" />
        <Quote name="H" value="1.13731" />
        <Quote name="L" value="1.13678" />
        <Quote name="C" value="1.13689" />
        <span className="whitespace-nowrap text-[#ef5350]">−0.00032 (−0.03%)</span>
      </div>
    </div>
    <div className="mt-[5px] flex h-[26px] items-center text-[16px]">
      <span className="w-[61px] whitespace-nowrap">Vol (20)</span>
      <Chevron />
      <div className="ml-[14px] mr-[12px]">
        <StudyButtons />
      </div>
      <span className="w-[58px] text-[#ef5350]">1.038K</span>
      <span className="text-[#ff9d45]">2.932K</span>
    </div>
    <div className="mt-[4px] flex h-[26px] items-center text-[16px]">
      <span className="w-[117px] whitespace-nowrap">MA (200, close)</span>
      <Chevron />
      <div className="ml-[13px] mr-[12px]">
        <StudyButtons />
      </div>
      <span className="tracking-tight text-[#f5811f]">1.12942</span>
    </div>
  </div>
);

const RANGES: [string, string][] = [
  ["1D", "w-[36.5px]"], ["5D", "w-[37.5px]"], ["1M", "w-[39px]"], ["3M", "w-[39px]"], ["6M", "w-[39px]"],
  ["YTD", "w-[49px]"], ["1Y", "w-[36px]"], ["5Y", "w-[37px]"], ["All", "w-[41px]"],
];

const Footer = () => (
  <footer className="flex h-[45px] items-center border-t-2 border-[#eceef3] bg-white pt-[2px] text-[16px] text-[#2a2e39]">
    <div className="flex pl-[22px]">
      {RANGES.map(([label, width]) => (
        <span key={label} className={clsx("tracking-tight", width)}>
          {label}
        </span>
      ))}
    </div>
    <div className="h-[26px] w-px bg-[#e0e3eb]" />
    <span className="ml-[20px]">Go to...</span>
    <div className="ml-auto flex items-center">
      <span className="w-[136px] whitespace-nowrap text-[#131722] tracking-[-0.01em]">21:32:00 (UTC+9)</span>
      <div className="ml-[20px] mr-[21px] h-[26px] w-px bg-[#e0e3eb]" />
      <span className="w-[34px]">%</span>
      <span className="w-[41px] text-[#131722]">log</span>
      <span className="w-[48px] text-[#2196f3]">auto</span>
    </div>
  </footer>
);

export default function App() {
  return (
    <div className="flex h-[1825px] w-[3456px] flex-col overflow-hidden bg-white font-['Open_Sans','Noto_Sans',sans-serif]">
      <Toolbar />
      <main className="relative flex h-[1701px]">
        <ChartPane />
        <PriceAxis />
        <Legend />
        <div className="absolute right-[81px] top-[11px] flex items-center text-[14.5px] text-[#9b9b9b]">
          <svg width="20" height="20" viewBox="0 0 20 20" className="mr-[6px]">
            <circle cx="10" cy="10" r="10" fill="#ff9147" />
            <path d="M10 4v12" stroke="#fff" strokeWidth="2" strokeDasharray="2.500 1.500" />
          </svg>
          <span className="mr-[4px] size-[7px] rounded-full bg-[#8f8f8f]" />
          Market Closed
        </div>
      </main>
      <div className="flex h-[33px] border-t-2 border-[#9598a1]">
        <TimeAxis />
        <div className="flex w-[75px] items-center justify-center border-l-[1.5px] border-[#9598a1] text-[#2a2e39]">
          <svg width="20" height="20" viewBox="0 0 20 20" fill="none" stroke="currentColor" strokeWidth="1.500">
            <circle cx="10" cy="10" r="5.800" />
            <circle cx="10" cy="10" r="7.800" strokeWidth="2.400" strokeDasharray="1.500 4.626" />
          </svg>
        </div>
      </div>
      <Footer />
    </div>
  );
}
